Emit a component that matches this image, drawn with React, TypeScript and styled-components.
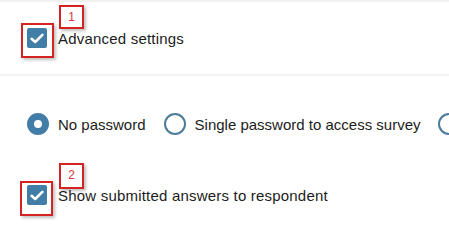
import React from "react";
import styled, { createGlobalStyle } from "styled-components";

const GlobalStyle = createGlobalStyle`
  html, body {
    margin: 0;
    padding: 0;
    background: #ffffff;
  }
  body {
    font-family: "Liberation Sans", Arial, sans-serif;
    color: #1c1c1c;
  }
`;

const Page = styled.div`
  position: relative;
  width: 449px;
  height: 251px;
  overflow: hidden;
  border-top: 2px solid #f1f1f1;
  box-sizing: border-box;
`;

const Header = styled.div`
  display: flex;
  align-items: center;
  height: 74px;
  padding-left: 27px;
  border-bottom: 2px solid #f3f3f3;
  box-sizing: border-box;
`;

const Body = styled.div`
  display: flex;
  flex-direction: column;
  padding: 37px 0 0 27px;
  gap: 50px;
`;

const CheckRow = styled.label`
  display: flex;
  align-items: center;
  gap: 11px;
  font-size: 15px;
  letter-spacing: 0.2px;
  white-space: nowrap;
`;

const Box = styled.span`
  width: 20px;
  height: 20px;
  border-radius: 2px;
  background: #417da7;
  display: flex;
  align-items: center;
  justify-content: center;
  flex: none;
`;

const RadioRow = styled.div`
  display: flex;
  align-items: center;
  white-space: nowrap;
  font-size: 15px;
`;

const RadioItem = styled.label`
  display: flex;
  align-items: center;
  gap: 9px;
  margin-right: 18px;
`;

const Dot = styled.span<{ $on?: boolean }>`
  width: 22px;
  height: 22px;
  box-sizing: border-box;
  border-radius: 50%;
  flex: none;
  border: ${(p) => (p.$on ? "7px solid #417da7" : "2px solid #4d7a97")};
  background: #ffffff;
`;

const Mark = styled.div<{ $x: number; $y: number; $w: number; $h: number }>`
  position: absolute;
  left: ${(p) => p.$x}px;
  top: ${(p) => p.$y}px;
  width: ${(p) => p.$w}px;
  height: ${(p) => p.$h}px;
  box-sizing: border-box;
  border: 2px solid #d52222;
  box-shadow: 2px 2px 3px rgba(0, 0, 0, 0.25);
  pointer-events: none;
  display: flex;
  justify-content: center;
  font-size: 12px;
  line-height: 1;
  padding-top: 4px;
  color: #e03636;
`;

const Check = () => (
  <svg width="14" height="11" viewBox="0 0 14 11">
    <path d="M1.6 5.8 L5.2 9 L12.4 1.8" fill="none" stroke="#ffffff" strokeWidth="2.6" strokeLinecap="round" strokeLinejoin="round" />
  </svg>
);

export default function App() {
  return (
    <Page>
      <GlobalStyle />
      <Header>
        <CheckRow>
          <Box><Check /></Box>
          Advanced settings
        </CheckRow>
      </Header>
      <Body>
        <RadioRow>
          <RadioItem><Dot $on />No password</RadioItem>
          <RadioItem><Dot />Single password to access survey</RadioItem>
          <RadioItem><Dot /></RadioItem>
        </RadioRow>
        <CheckRow>
          <Box><Check /></Box>
          Show submitted answers to respondent
        </CheckRow>
      </Body>
      <Mark $x={21} $y={21} $w={33} $h={35} />
      <Mark $x={59} $y={3} $w={25} $h={24}>1</Mark>
      <Mark $x={20} $y={179} $w={33} $h={35} />
      <Mark $x={59} $y={161} $w={25} $h={26}>2</Mark>
    </Page>
  );
}
